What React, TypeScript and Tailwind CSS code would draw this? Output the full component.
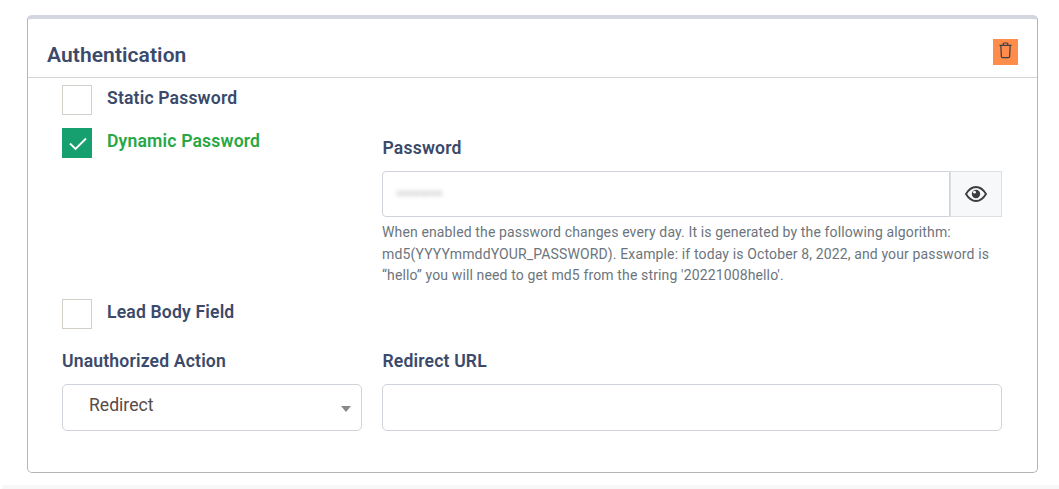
import React from "react";

const font = "font-['Roboto',sans-serif]";
const labelText = "text-[17.6px] font-semibold tracking-[0.16px] leading-[26px]";

function Check({ checked }: { checked?: boolean }) {
  return checked ? (
    <div className="w-[30px] h-[30px] bg-[#16a06f] flex items-center justify-center shrink-0">
      <svg width="18" height="14" viewBox="0 0 18 14" fill="none" className="mt-[2px] ml-[1px]">
        <path d="M1 6.5 L6.5 12 L17 1.5" stroke="#fff" strokeWidth="1.9" />
      </svg>
    </div>
  ) : (
    <div className="w-[30px] h-[30px] border border-[#d5cfca] bg-white shrink-0" />
  );
}

export default function App() {
  return (
    <div className={`${font} relative h-[489px] w-[1059px] overflow-hidden bg-white`}>
      <div className="pl-[27px] pt-[15px] w-[1038px]">
        <div className="h-[458px] rounded-[5px] border border-[#b5b5b5] border-t-4 border-t-[#d2d6df] bg-white">
          <div className="h-[59px] border-b border-[#d6d6d6] flex items-center justify-between pl-[19px] pr-[19px]">
            <h2 className="text-[21px] font-semibold tracking-[0.08px] text-[#3b4a6b] mt-[14px] leading-[24px]">Authentication</h2>
            <button className="w-[25px] h-[26px] bg-[#ff8c4a] flex items-start justify-center pt-[3px] mt-[8px]">
              <svg width="15" height="17" viewBox="0 0 16 18" fill="none" stroke="#3a3f4a" strokeWidth="1.3">
                <path d="M1.5 3.5 H14.5" />
                <path d="M5.5 3.5 V2 Q5.5 1 6.5 1 H9.5 Q10.5 1 10.5 2 V3.5" />
                <path d="M3 3.5 L3.6 15.5 Q3.7 16.5 4.7 16.5 H11.3 Q12.3 16.5 12.4 15.5 L13 3.5" />
              </svg>
            </button>
          </div>
          <div className="pl-[34px] pr-[35px] pt-[7px]">
            <div className="flex gap-[15px] h-[30px]">
              <Check />
              <span className={`${labelText} text-[#3b4a6b]`}>Static Password</span>
            </div>
            <div className="grid grid-cols-[300px_620px] gap-x-[20px] mt-[13px]">
              <div className="flex gap-[15px]">
                <Check checked />
                <span className={`${labelText} text-[#28a745]`}>Dynamic Password</span>
              </div>
              <div className="pt-[7px]">
                <label className={`${labelText} block text-[#3b4a6b] pl-[0.5px]`}>Password</label>
                <div className="flex mt-[10px] h-[46px]">
                  <div className="w-[568px] border border-[#ced4da] rounded-l-[4px] bg-white flex items-center pl-[14px]">
                    <span className="blur-[2.5px] text-[#777777] text-[14px] tracking-[1px]">••••••••</span>
                  </div>
                  <div className="w-[52px] border border-[#dcdfe3] bg-[#f7f8fa] flex items-center justify-center">
                    <svg width="22" height="16" viewBox="0 0 22 16">
                      <path d="M1 8 C4 3 7.5 1 11 1 C14.5 1 18 3 21 8 C18 13 14.5 15 11 15 C7.5 15 4 13 1 8 Z" fill="none" stroke="#3d3d3d" strokeWidth="1.9" />
                      <circle cx="11" cy="8" r="4.2" fill="#3d3d3d" />
                      <circle cx="9.5" cy="6.2" r="1.4" fill="#fff" />
                    </svg>
                  </div>
                </div>
                <p className="mt-[5px] text-[14px] tracking-[0.135px] leading-[21.5px] text-[#6c757d] w-[620px]">
                  When enabled the password changes every day. It is generated by the following algorithm:
                  <br />
                  md5(YYYYmmddYOUR_PASSWORD). Example: if today is October 8, 2022, and your password is
                  <br />
                  “hello” you will need to get md5 from the string '20221008hello'.
                </p>
              </div>
            </div>
            <div className="flex gap-[15px] h-[30px] mt-[12px]">
              <Check />
              <span className={`${labelText} text-[#3b4a6b]`}>Lead Body Field</span>
            </div>
            <div className="grid grid-cols-[300px_620px] gap-x-[20px] mt-[19px]">
              <div>
                <label className={`${labelText} block text-[#3b4a6b]`}>Unauthorized Action</label>
                <div className="relative mt-[10px] h-[47px] border border-[#ced4da] rounded-[5px] bg-white pl-[26px] pt-[7px] text-[17.6px] leading-[26px] text-[#574a48]">
                  Redirect
                  <span className="absolute right-[10px] top-[21px] w-0 h-0 border-l-[5px] border-r-[5px] border-t-[6px] border-l-transparent border-r-transparent border-t-[#888]" />
                </div>
              </div>
              <div>
                <label className={`${labelText} block text-[#3b4a6b] pl-[0.5px]`}>Redirect URL</label>
                <div className="mt-[10px] h-[47px] border border-[#ced4da] rounded-[5px] bg-white" />
              </div>
            </div>
          </div>
        </div>
      </div>
      <div className="absolute left-[2px] right-0 top-[485px] h-[4px] bg-[#f7f7f7]" />
    </div>
  );
}
